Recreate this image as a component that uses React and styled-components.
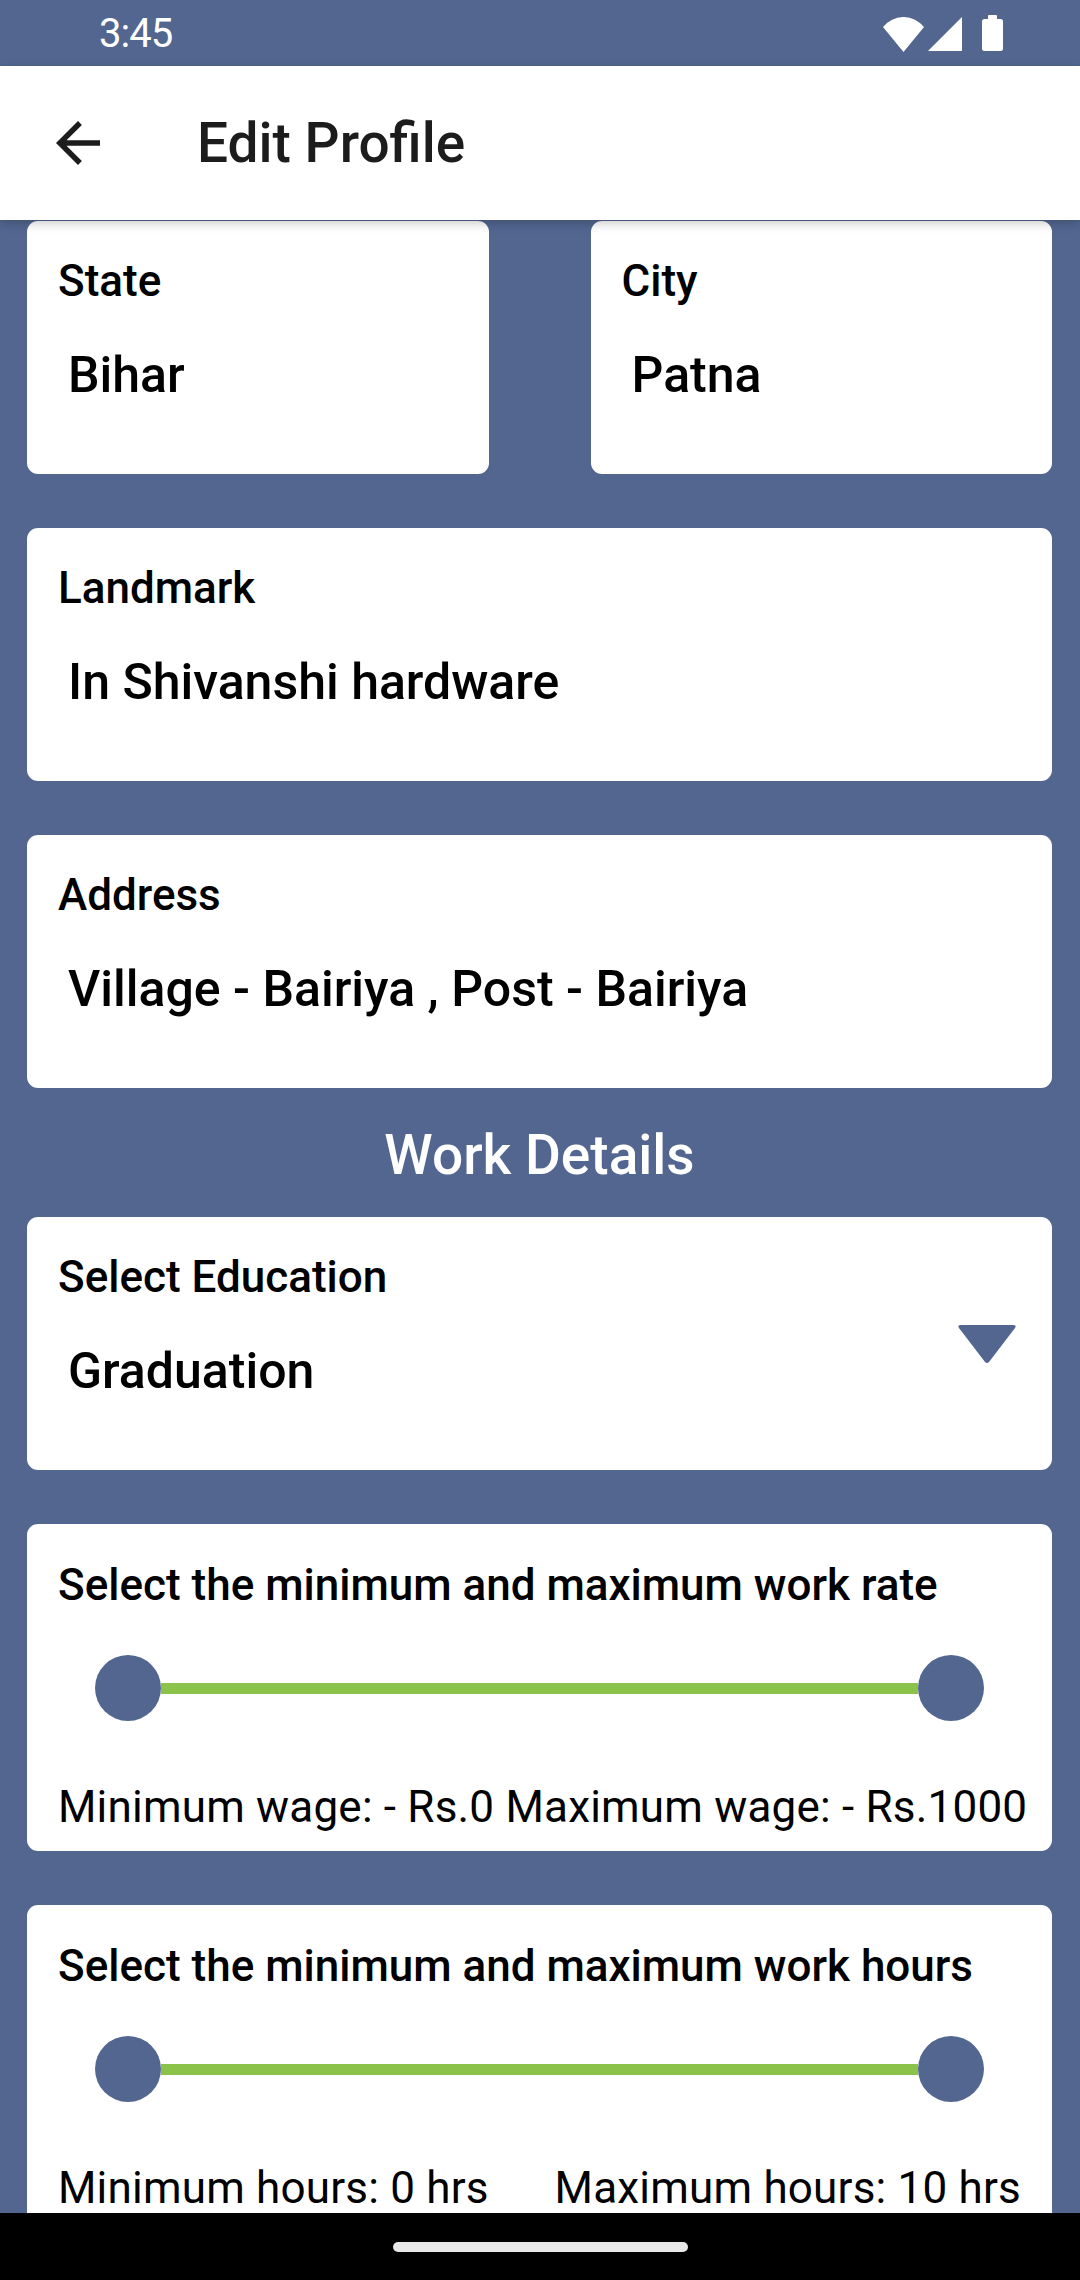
import React from "react";
import styled, { createGlobalStyle } from "styled-components";

const GlobalStyle = createGlobalStyle`
  html, body {
    margin: 0;
    padding: 0;
    background: #526690;
  }
  * {
    box-sizing: border-box;
  }
`;

const Screen = styled.div`
  width: 1080px;
  height: 2280px;
  display: flex;
  flex-direction: column;
  background: #526690;
  font-family: Roboto, "Noto Sans", sans-serif;
  color: #000;
  overflow: hidden;
`;

const StatusBar = styled.div`
  height: 66px;
  flex-shrink: 0;
  display: flex;
  align-items: center;
  justify-content: space-between;
  padding: 0 77px 0 99px;
  color: #fff;
  font-size: 40px;
  letter-spacing: -1px;
`;

const StatusIcons = styled.div`
  display: flex;
  align-items: flex-start;
  gap: 4px;
  padding-top: 2px;

  svg:last-child {
    margin-left: 16px;
    margin-top: -2px;
  }
`;

const AppBar = styled.header`
  position: relative;
  z-index: 1;
  height: 154px;
  flex-shrink: 0;
  display: flex;
  align-items: center;
  padding-left: 45px;
  background: #fff;
  box-shadow: 0 3px 10px rgba(0, 0, 0, 0.22);
`;

const BackButton = styled.button`
  width: 66px;
  height: 66px;
  padding: 0;
  border: none;
  background: none;
  display: flex;
  color: #1c1c1c;
`;

const Title = styled.h1`
  margin: 0 0 0 86px;
  font-size: 55px;
  font-weight: 500;
  color: #1c1c1c;
`;

const Content = styled.main`
  flex: 1;
  overflow: hidden;
  display: flex;
  flex-direction: column;
  padding: 1px 28px 0 27px;
`;

const Row = styled.div`
  display: grid;
  grid-template-columns: 1fr 1fr;
  column-gap: 102px;
`;

const Card = styled.section`
  background: #fff;
  border-radius: 11px;
  padding: ${(p) => (p.$slider ? "35px 31px 18px" : "34px 31px 70px")};
  margin-top: ${(p) => p.$mt ?? 54}px;
  flex-shrink: 0;
`;

const Label = styled.div`
  font-size: 44px;
  line-height: 52px;
  font-weight: 500;
  white-space: nowrap;
`;

const ValueRow = styled.div`
  display: flex;
  align-items: flex-start;
  margin-top: 39px;
`;

const Value = styled.div`
  flex: 1;
  padding-left: 10px;
  font-size: 50px;
  line-height: 58px;
  font-weight: 500;
  white-space: nowrap;
`;

const DropArrow = styled.svg`
  width: 60px;
  height: 39px;
  margin: -17px 4px 0 0;
  fill: #526690;
`;

const SectionTitle = styled.h2`
  margin: 35px 0 0;
  text-align: center;
  font-size: 55px;
  line-height: 64px;
  font-weight: 500;
  color: #fff;
`;

const Slider = styled.div`
  display: flex;
  align-items: center;
  margin: 44px 37px 60px;
`;

const Thumb = styled.span`
  width: 66px;
  height: 66px;
  border-radius: 50%;
  background: #526690;
  flex-shrink: 0;
`;

const Track = styled.span`
  flex: 1;
  height: 11px;
  background: #8bc34a;
`;

const RangeText = styled.div`
  display: flex;
  justify-content: space-between;
  font-size: 44px;
  line-height: 52px;
  letter-spacing: 0.2px;
  white-space: nowrap;
`;

const NavBar = styled.div`
  height: 67px;
  flex-shrink: 0;
  display: flex;
  align-items: center;
  justify-content: center;
  background: #000;
`;

const HomePill = styled.span`
  width: 295px;
  height: 10px;
  border-radius: 5px;
  background: #e8e8e8;
`;

const Field = ({ label, value, mt }) => (
  <Card $mt={mt}>
    <Label>{label}</Label>
    <ValueRow>
      <Value>{value}</Value>
    </ValueRow>
  </Card>
);

const RangeCard = ({ title, left, right }) => (
  <Card $slider>
    <Label>{title}</Label>
    <Slider>
      <Thumb />
      <Track />
      <Thumb />
    </Slider>
    <RangeText>
      <span>{left}</span>
      {right && <span>{right}</span>}
    </RangeText>
  </Card>
);

export default function App() {
  return (
    <>
      <GlobalStyle />
      <Screen>
        <StatusBar>
          <span>3:45</span>
          <StatusIcons>
            <svg width="41" height="35" viewBox="0 0 41 35">
              <path d="M0 10 A26 26 0 0 1 41 10 L20.5 35 Z" fill="#fff" />
            </svg>
            <svg width="34" height="34" viewBox="0 0 34 34">
              <path d="M34 0 V34 H0 Z" fill="#fff" />
            </svg>
            <svg width="21" height="36" viewBox="0 0 21 36">
              <rect x="6" y="0" width="9" height="6" rx="1" fill="#fff" />
              <rect x="0" y="4" width="21" height="32" rx="2.5" fill="#fff" />
            </svg>
          </StatusIcons>
        </StatusBar>

        <AppBar>
          <BackButton aria-label="Back">
            <svg width="66" height="66" viewBox="0 0 24 24" fill="currentColor">
              <path d="M20 11H7.83l5.59-5.59L12 4l-8 8 8 8 1.41-1.41L7.83 13H20v-2z" />
            </svg>
          </BackButton>
          <Title>Edit Profile</Title>
        </AppBar>

        <Content>
          <Row>
            <Field label="State" value="Bihar" mt={0} />
            <Field label="City" value="Patna" mt={0} />
          </Row>
          <Field label="Landmark" value="In Shivanshi hardware" mt={54} />
          <Field label="Address" value="Village - Bairiya , Post - Bairiya" />

          <SectionTitle>Work Details</SectionTitle>

          <Card $mt={30}>
            <Label>Select Education</Label>
            <ValueRow>
              <Value>Graduation</Value>
              <DropArrow viewBox="0 0 60 39">
                <path d="M4 0 H56 Q60 0 58 3 L32 37 Q30 39 28 37 L2 3 Q0 0 4 0 Z" />
              </DropArrow>
            </ValueRow>
          </Card>

          <RangeCard
            title="Select the minimum and maximum work rate"
            left="Minimum wage: - Rs.0 Maximum wage: - Rs.1000"
          />
          <RangeCard
            title="Select the minimum and maximum work hours"
            left="Minimum hours: 0 hrs"
            right="Maximum hours: 10 hrs"
          />
        </Content>

        <NavBar>
          <HomePill />
        </NavBar>
      </Screen>
    </>
  );
}
